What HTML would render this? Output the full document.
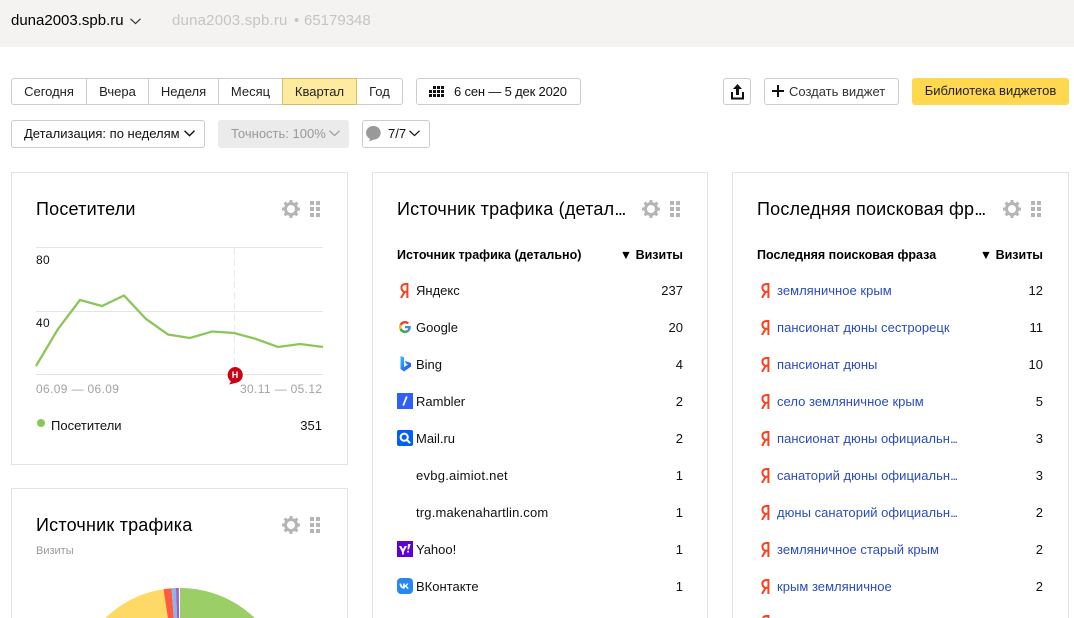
<!DOCTYPE html>
<html lang="ru"><head><meta charset="utf-8"><style>
html,body{margin:0;padding:0;width:1074px;height:618px;overflow:hidden;background:#fff}
body{position:relative;font-family:"Liberation Sans",Arial,sans-serif;font-size:13px;color:#111}
#w{position:relative;width:1074px;height:618px;overflow:hidden}
.a,.b,.c,.t,.h,.r,.n,.l{position:absolute;white-space:nowrap}
.b{box-sizing:border-box;height:28px;line-height:25px;border:1px solid #ccc;border-radius:3px;background:#fff;color:#222;text-align:center}
.s{position:absolute;top:78px;height:27px;box-sizing:border-box;line-height:25px;border:1px solid #ccc;border-left:0;text-align:center;color:#222;background:#fff}
.c{box-sizing:border-box;border:1px solid #e3e3e3;background:#fff}
.t{font-size:18px;line-height:22px;color:#000;top:198px;letter-spacing:.2px}
.t i{font-style:normal;letter-spacing:-1.5px}
.h{top:247px;font-weight:bold;font-size:12.5px;line-height:16px;color:#000}
.r{font-size:13px;line-height:16px;color:#111;margin-top:1px}
.n{font-size:13px;line-height:16px;color:#111;text-align:right;width:60px;margin-top:1px}
.l{font-size:13px;line-height:16px;color:#2a4cc0;left:777px;margin-top:1px;letter-spacing:.03px}
.l i{font-style:normal;letter-spacing:-1.400px}
svg{position:absolute}
</style></head><body><div id="w">
<div class="a" style="left:0;top:0;width:1074px;height:47px;background:#f4f3f1"></div>
<div class="a" style="left:11px;top:12px;font-size:15px;line-height:18px;color:#000">duna2003.spb.ru</div>
<svg style="left:130px;top:18px" width="11" height="7"><path d="M.5 .8 5.500 5.600 10.500 .8" fill="none" stroke="#333" stroke-width="1.200"/></svg>
<div class="a" style="left:172px;top:12px;font-size:15px;line-height:18px;color:#c4c4c4;letter-spacing:.2px">duna2003.spb.ru</div>
<div class="a" style="left:294px;top:12px;font-size:15px;line-height:18px;color:#c4c4c4">•</div>
<div class="a" style="left:304px;top:12px;font-size:15px;line-height:18px;color:#c4c4c4">65179348</div>

<div class="s" style="left:11px;width:76px;border-left:1px solid #ccc;border-radius:3px 0 0 3px">Сегодня</div>
<div class="s" style="left:87px;width:62px">Вчера</div>
<div class="s" style="left:149px;width:70px">Неделя</div>
<div class="s" style="left:219px;width:64px">Месяц</div>
<div class="s" style="left:282px;width:75px;background:#ffeba0;border:1px solid #d6bc66">Квартал</div>
<div class="s" style="left:357px;width:46px;border-radius:0 3px 3px 0">Год</div>

<div class="b" style="left:416px;top:78px;width:165px;height:27px;text-align:left;padding-left:37px;color:#111;letter-spacing:-.17px">6 сен — 5 дек 2020</div>
<svg style="left:429px;top:86px" width="15" height="11" fill="#111"><path d="M0 4h3v3H0zM0 8h3v3H0zM4 0h3v3H4zM4 4h3v3H4zM4 8h3v3H4zM8 0h3v3H8zM8 4h3v3H8zM8 8h3v3H8zM12 0h3v3h-3zM12 4h3v3h-3zM12 8h3v3h-3z"/></svg>

<div class="b" style="left:723px;top:78px;width:28px;height:27px"></div>
<svg style="left:731px;top:84px" width="13" height="16" fill="#111"><path d="M6.500 0 11 5H8v6H5V5H2z"/><path d="M0 8h2v5.500h9V8h2v7.500H0z"/></svg>
<div class="b" style="left:764px;top:78px;width:135px;height:27px;text-align:left;padding-left:24px;color:#333">Создать виджет</div>
<svg style="left:772px;top:85px" width="12" height="12"><path d="M6 0v12M0 6h12" stroke="#111" stroke-width="2"/></svg>
<div class="a" style="left:912px;top:78px;width:157px;height:27px;line-height:25px;background:#ffd84f;border-radius:3px;text-align:center;color:#222">Библиотека виджетов</div>

<div class="b" style="left:11px;top:120px;width:194px;text-align:left;padding-left:12px;color:#111">Детализация: по неделям</div>
<svg style="left:184px;top:130px" width="11" height="7"><path d="M.5 .8 5.500 5.600 10.500 .8" fill="none" stroke="#111" stroke-width="1.400"/></svg>
<div class="a" style="left:218px;top:120px;width:131px;height:28px;line-height:27px;background:#ebebeb;border-radius:3px;color:#999;padding-left:13px;box-sizing:border-box">Точность: 100%</div>
<svg style="left:329px;top:130px" width="11" height="7"><path d="M.5 .8 5.500 5.600 10.500 .8" fill="none" stroke="#999" stroke-width="1.200"/></svg>
<div class="b" style="left:362px;top:120px;width:68px;text-align:left;padding-left:25px;color:#111">7/7</div>
<svg style="left:366px;top:126px" width="15" height="16"><path d="M7.500 0a7 6.800 0 0 1 .3 13.600c-1.500.4-3 1.200-4.800 1.900.6-1 .9-1.800.8-2.700A7 6.800 0 0 1 7.500 0z" fill="#999"/></svg>
<svg style="left:409px;top:130px" width="11" height="7"><path d="M.5 .8 5.500 5.600 10.500 .8" fill="none" stroke="#111" stroke-width="1.200"/></svg>

<div class="c" style="left:11px;top:172px;width:337px;height:293px"></div>
<div class="c" style="left:372px;top:172px;width:336px;height:446px;border-bottom:0"></div>
<div class="c" style="left:732px;top:172px;width:337px;height:446px;border-bottom:0"></div>
<div class="c" style="left:11px;top:488px;width:337px;height:130px;border-bottom:0"></div>

<svg width="0" height="0" style="left:0;top:0"><defs>
<g id="gr" fill="#b5b5b5"><path d="M0 0h4v4H0zM6 0h4v4H6zM0 6h4v4H0zM6 6h4v4H6zM0 12h4v4H0zM6 12h4v4H6z"/></g>
<g id="ge"><circle cx="9" cy="9" r="5.500" fill="none" stroke="#b5b5b5" stroke-width="3"/><path d="M9 0v18M0 9h18M2.600 2.600l12.800 12.800M15.400 2.600 2.600 15.400" stroke="#b5b5b5" stroke-width="3" stroke-dasharray="3 12 3"/></g>
<path id="ya" d="M7.400 15V1H5.600C3 1 1.400 2.500 1.400 4.800c0 2 1 3.200 3 4.400L1 15M7.400 8.700H4.800" fill="none" stroke="#fc3f1d" stroke-width="2"/>
</defs></svg>

<div class="t" style="left:36px">Посетители</div>
<div class="t" style="left:36px;top:514px">Источник трафика</div>
<div class="t" style="left:397px">Источник трафика (детал<i>...</i></div>
<div class="t" style="left:757px">Последняя поисковая фр<i>...</i></div>
<svg style="left:282px;top:200px" width="18" height="18"><use href="#ge"/></svg>
<svg style="left:310px;top:201px" width="10" height="16"><use href="#gr"/></svg>
<svg style="left:282px;top:516px" width="18" height="18"><use href="#ge"/></svg>
<svg style="left:310px;top:517px" width="10" height="16"><use href="#gr"/></svg>
<svg style="left:642px;top:200px" width="18" height="18"><use href="#ge"/></svg>
<svg style="left:670px;top:201px" width="10" height="16"><use href="#gr"/></svg>
<svg style="left:1003px;top:200px" width="18" height="18"><use href="#ge"/></svg>
<svg style="left:1031px;top:201px" width="10" height="16"><use href="#gr"/></svg>

<svg style="left:0;top:0" width="360" height="400">
<path d="M36 247.500H323M36 311.500H323M36 374.500H323" stroke="#e4e4e4" fill="none"/>
<path d="M234.500 248V370" stroke="#e8e8e8" stroke-dasharray="7 4" fill="none"/>
<polyline points="36,366 58,329 80,300 102,306 124,295.500 146,319 168,334.500 190,338 212,331.500 234,333 256,339 278,347 300,344 323,347" fill="none" stroke="#8cc65a" stroke-width="2.300"/>
<path d="M235 367a8 8 0 0 1 1 15.900l-7 1.600 2-3A8 8 0 0 1 235 367z" fill="#cc0018"/>
<text x="235" y="378" font-size="9" font-weight="bold" fill="#fff" text-anchor="middle" font-family="Liberation Sans">Н</text>
</svg>
<div class="a" style="left:36px;top:252px;font-size:12px;line-height:16px;color:#111;letter-spacing:.3px">80</div>
<div class="a" style="left:36px;top:315px;font-size:12px;line-height:16px;color:#111;letter-spacing:.3px">40</div>
<div class="a" style="left:36px;top:381px;font-size:12px;line-height:16px;color:#a3a3a3;letter-spacing:.35px">06.09 — 06.09</div>
<div class="a" style="left:240px;top:381px;font-size:12px;line-height:16px;color:#a3a3a3;letter-spacing:.35px">30.11 — 05.12</div>
<div class="a" style="left:37px;top:419px;width:8px;height:8px;border-radius:50%;background:#8cc65a"></div>
<div class="r" style="left:51px;top:417px">Посетители</div>
<div class="n" style="left:262px;top:417px">351</div>
<div class="a" style="left:36px;top:544px;font-size:11px;line-height:14px;color:#999">Визиты</div>

<svg style="left:100px;top:586px" width="160" height="32" viewBox="100 586 160 32">
<path d="M180 618V588A108 108 0 0 1 254.700 618z" fill="#9bce66"/>
<path d="M167.900 618 163.500 589.300A108 108 0 0 0 105.300 618z" fill="#ffd966"/>
<path d="M173.800 618 171.500 588.300 163.500 589.300 167.900 618z" fill="#ff5a3c"/>
<path d="M177.100 618 176 588 171.500 588.300 173.800 618z" fill="#8bb4e8"/>
<path d="M179.100 618 178.800 588 176 588 177.100 618z" fill="#a55cc0"/>
</svg>

<div class="h" style="left:397px">Источник трафика (детально)</div>
<div class="h" style="left:583px;width:100px;text-align:right">▼ Визиты</div>
<div class="h" style="left:757px">Последняя поисковая фраза</div>
<div class="h" style="left:943px;width:100px;text-align:right">▼ Визиты</div>

<svg style="left:400px;top:283px" width="9" height="15"><use href="#ya"/></svg>
<div class="r" style="left:416px;top:282px">Яндекс</div><div class="n" style="left:623px;top:282px">237</div>
<svg style="left:399px;top:321px" width="12" height="12" viewBox="0 0 48 48"><path fill="#EA4335" d="M24 9.500c3.540 0 6.710 1.220 9.210 3.600l6.850-6.850C35.900 2.380 30.470 0 24 0 14.620 0 6.510 5.380 2.560 13.220l7.980 6.190C12.430 13.720 17.740 9.500 24 9.500z"/><path fill="#4285F4" d="M46.980 24.550c0-1.570-.15-3.090-.38-4.550H24v9.020h12.940c-.58 2.960-2.260 5.480-4.780 7.180l7.730 6c4.510-4.180 7.090-10.360 7.090-17.650z"/><path fill="#FBBC05" d="M10.530 28.590c-.48-1.450-.76-2.990-.76-4.590s.27-3.140.76-4.590l-7.980-6.190C.92 16.460 0 20.120 0 24c0 3.880.92 7.540 2.560 10.780l7.970-6.190z"/><path fill="#34A853" d="M24 48c6.480 0 11.930-2.130 15.890-5.810l-7.730-6c-2.150 1.450-4.920 2.300-8.160 2.300-6.260 0-11.570-4.220-13.470-9.910l-7.980 6.190C6.510 42.620 14.620 48 24 48z"/></svg>
<div class="r" style="left:416px;top:319px">Google</div><div class="n" style="left:623px;top:319px">20</div>
<svg style="left:400px;top:356px" width="12" height="16"><defs><linearGradient id="bg" x1="0" y1="0" x2="1" y2="1"><stop offset="0" stop-color="#37bdff"/><stop offset="1" stop-color="#1b48ef"/></linearGradient></defs><path d="M.5 0 4 1.200V11l4-2.400-2-.9-1.200-3L11 7v3.500L4 15.500.5 13z" fill="url(#bg)"/></svg>
<div class="r" style="left:416px;top:356px">Bing</div><div class="n" style="left:623px;top:356px">4</div>
<svg style="left:397px;top:393px" width="16" height="16"><rect width="16" height="16" fill="#315efb"/><path d="M9.800 3.500 6.200 12.500" stroke="#fff" stroke-width="1.800"/></svg>
<div class="r" style="left:416px;top:393px">Rambler</div><div class="n" style="left:623px;top:393px">2</div>
<svg style="left:397px;top:430px" width="16" height="16"><rect width="16" height="16" rx="2" fill="#005ff9"/><circle cx="7.200" cy="7.200" r="3.600" fill="none" stroke="#fff" stroke-width="2"/><path d="M10 10l3.200 3.200" stroke="#fff" stroke-width="2"/></svg>
<div class="r" style="left:416px;top:430px">Mail.ru</div><div class="n" style="left:623px;top:430px">2</div>
<div class="r" style="left:416px;top:467px;letter-spacing:.25px">evbg.aimiot.net</div><div class="n" style="left:623px;top:467px">1</div>
<div class="r" style="left:416px;top:504px;letter-spacing:.18px">trg.makenahartlin.com</div><div class="n" style="left:623px;top:504px">1</div>
<svg style="left:397px;top:541px" width="16" height="16"><rect width="16" height="16" fill="#5f01d1"/><path d="M2 5h2.300L6 8.300 7.700 5H10L6.800 11v2.500H5V11zM11 3h2.600L12 8.500h-1.500zM10.200 9.800h1.700v1.700h-1.700z" fill="#fff"/></svg>
<div class="r" style="left:416px;top:541px">Yahoo!</div><div class="n" style="left:623px;top:541px">1</div>
<svg style="left:397px;top:578px" width="16" height="16"><rect width="16" height="16" rx="4" fill="#2787f5"/><path d="M2.500 5.500H4.200C4.400 7.500 5.300 8.500 6.100 8.700V5.500H7.700V7.300C8.500 7.200 9.300 6.400 9.700 5.500H11.300C11 6.700 10.100 7.600 9.400 8 10.100 8.300 11.200 9.200 11.700 10.700H10C9.600 9.600 8.800 8.800 7.700 8.700V10.700H7.400C4.500 10.700 2.700 8.700 2.500 5.500z" fill="#fff"/></svg>
<div class="r" style="left:416px;top:578px">ВКонтакте</div><div class="n" style="left:623px;top:578px">1</div>

<svg style="left:761px;top:283px" width="9" height="15"><use href="#ya"/></svg>
<div class="l" style="top:282px">земляничное крым</div><div class="n" style="left:983px;top:282px">12</div>
<svg style="left:761px;top:320px" width="9" height="15"><use href="#ya"/></svg>
<div class="l" style="top:319px">пансионат дюны сестрорецк</div><div class="n" style="left:983px;top:319px">11</div>
<svg style="left:761px;top:357px" width="9" height="15"><use href="#ya"/></svg>
<div class="l" style="top:356px">пансионат дюны</div><div class="n" style="left:983px;top:356px">10</div>
<svg style="left:761px;top:394px" width="9" height="15"><use href="#ya"/></svg>
<div class="l" style="top:393px">село земляничное крым</div><div class="n" style="left:983px;top:393px">5</div>
<svg style="left:761px;top:431px" width="9" height="15"><use href="#ya"/></svg>
<div class="l" style="top:430px">пансионат дюны официальн<i>...</i></div><div class="n" style="left:983px;top:430px">3</div>
<svg style="left:761px;top:468px" width="9" height="15"><use href="#ya"/></svg>
<div class="l" style="top:467px">санаторий дюны официальн<i>...</i></div><div class="n" style="left:983px;top:467px">3</div>
<svg style="left:761px;top:505px" width="9" height="15"><use href="#ya"/></svg>
<div class="l" style="top:504px">дюны санаторий официальн<i>...</i></div><div class="n" style="left:983px;top:504px">2</div>
<svg style="left:761px;top:542px" width="9" height="15"><use href="#ya"/></svg>
<div class="l" style="top:541px">земляничное старый крым</div><div class="n" style="left:983px;top:541px">2</div>
<svg style="left:761px;top:579px" width="9" height="15"><use href="#ya"/></svg>
<div class="l" style="top:578px">крым земляничное</div><div class="n" style="left:983px;top:578px">2</div>
<svg style="left:761px;top:615px" width="9" height="3"><path d="M7.400 3V1H5.600C4 1 2.800 1.600 2 3" fill="none" stroke="#fc3f1d" stroke-width="2"/></svg>
</div></body></html>
